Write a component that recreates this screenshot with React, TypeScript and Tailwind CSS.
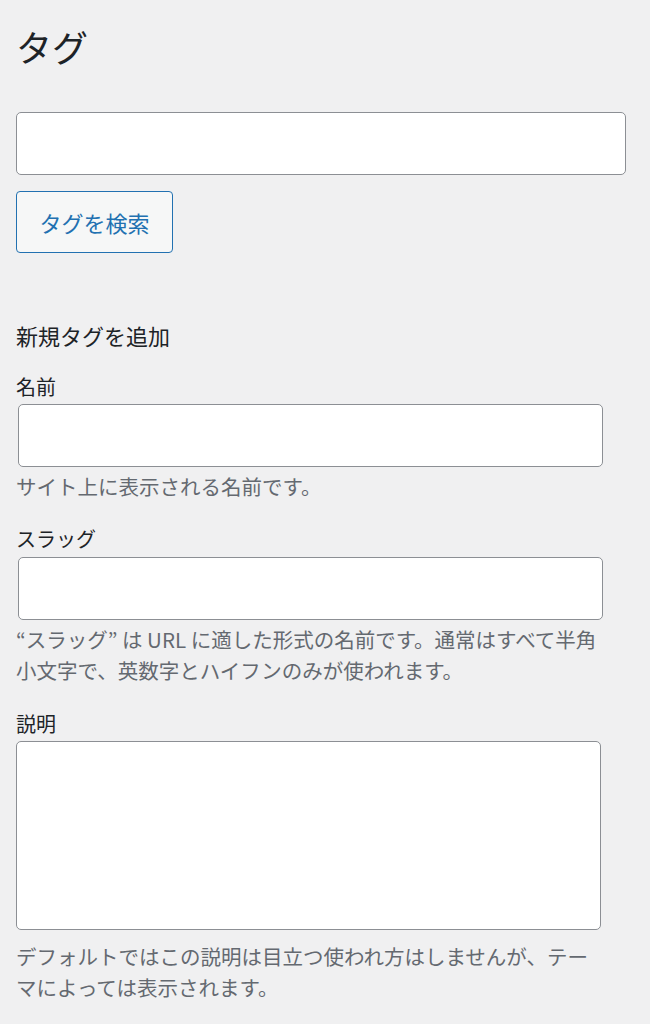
export default function App() {
  return (
    <div
      className="min-h-[1024px] w-[650px] bg-[#f0f0f1] pl-4 pt-6 text-[#1d2327]"
      style={{ fontFamily: '"Noto Sans CJK JP", "Noto Sans", sans-serif' }}
    >
      <h1 className="text-[36px] leading-[44px] font-normal">タグ</h1>

      {/* Search */}
      <input
        type="search"
        className="mt-[44px] block h-[63px] w-[610px] rounded-[5px] border border-[#8c8f94] bg-white px-3 outline-none"
      />
      <button className="mt-4 flex h-[62px] w-[157px] items-center justify-center rounded-[4px] border border-[#2271b1] bg-[#f6f7f7] text-[22px] leading-[30px] text-[#2271b1]">
        タグを検索
      </button>

      {/* Add new tag */}
      <div className="mt-[67px] w-[587px]">
        <h2 className="text-[22px] leading-[30px] font-normal">新規タグを追加</h2>

        <label className="mt-[23px] block text-[20px] leading-[28px]">名前</label>
        <input
          type="text"
          className="mt-[3px] ml-[2px] block h-[63px] w-[585px] rounded-[5px] border border-[#8c8f94] bg-white px-3 outline-none"
        />
        <p className="mt-1 text-[20.5px] leading-[31px] text-[#646970]">サイト上に表示される名前です。</p>

        <label className="mt-[23px] block text-[20px] leading-[28px]">スラッグ</label>
        <input
          type="text"
          className="mt-1 ml-[2px] block h-[63px] w-[585px] rounded-[5px] border border-[#8c8f94] bg-white px-3 outline-none"
        />
        <p className="mt-1 text-[20.5px] leading-[31px] text-[#646970]">
          “スラッグ” は URL に適した形式の名前です。通常はすべて半角小文字で、英数字とハイフンのみが使われます。
        </p>

        <label className="mt-6 block text-[20px] leading-[28px]">説明</label>
        <textarea className="mt-[3px] block h-[189px] w-[585px] resize-none rounded-[5px] border border-[#8c8f94] bg-white px-3 outline-none" />
        <p className="mt-[11px] text-[20.5px] leading-[31px] text-[#646970]">
          デフォルトではこの説明は目立つ使われ方はしませんが、テーマによっては表示されます。
        </p>
      </div>
    </div>
  )
}
